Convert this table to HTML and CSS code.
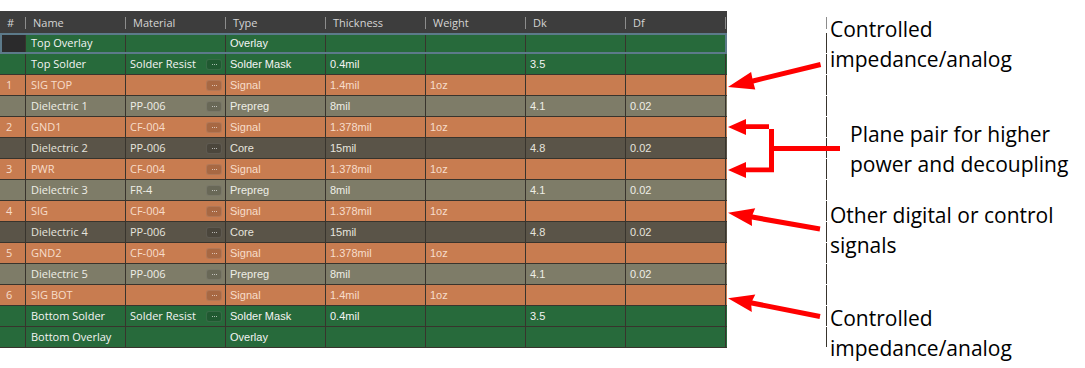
FILE: index.html
```html
<!DOCTYPE html>
<html>
<head>
<meta charset="utf-8">
<link rel="stylesheet" href="styles.css">
</head>
<body>
<div class="page">
  <div class="stack">
    <div class="head">
      <div class="hc">#</div><div class="hc">Name</div><div class="hc">Material</div><div class="hc">Type</div><div class="hc">Thickness</div><div class="hc">Weight</div><div class="hc">Dk</div><div class="hc">Df</div><div class="hc"></div>
    </div>
    <div class="row green selected">
      <div class="c idx dark"></div><div class="c">Top Overlay</div><div class="c mat"></div><div class="c d">Overlay</div><div class="c d"></div><div class="c d"></div><div class="c d"></div><div class="c d"></div><div class="c d"></div>
    </div>
    <div class="row green">
      <div class="c idx"></div><div class="c">Top Solder</div><div class="c mat">Solder Resist<span class="more"><i></i><i></i><i></i></span></div><div class="c d">Solder Mask</div><div class="c d">0.4mil</div><div class="c d"></div><div class="c d">3.5</div><div class="c d"></div><div class="c d"></div>
    </div>
    <div class="row copper">
      <div class="c idx">1</div><div class="c">SIG TOP</div><div class="c mat"><span class="more"><i></i><i></i><i></i></span></div><div class="c d">Signal</div><div class="c d">1.4mil</div><div class="c d">1oz</div><div class="c d"></div><div class="c d"></div><div class="c d"></div>
    </div>
    <div class="row prepreg">
      <div class="c idx"></div><div class="c">Dielectric 1</div><div class="c mat">PP-006<span class="more"><i></i><i></i><i></i></span></div><div class="c d">Prepreg</div><div class="c d">8mil</div><div class="c d"></div><div class="c d">4.1</div><div class="c d">0.02</div><div class="c d"></div>
    </div>
    <div class="row copper">
      <div class="c idx">2</div><div class="c">GND1</div><div class="c mat">CF-004<span class="more"><i></i><i></i><i></i></span></div><div class="c d">Signal</div><div class="c d">1.378mil</div><div class="c d">1oz</div><div class="c d"></div><div class="c d"></div><div class="c d"></div>
    </div>
    <div class="row core">
      <div class="c idx"></div><div class="c">Dielectric 2</div><div class="c mat">PP-006<span class="more"><i></i><i></i><i></i></span></div><div class="c d">Core</div><div class="c d">15mil</div><div class="c d"></div><div class="c d">4.8</div><div class="c d">0.02</div><div class="c d"></div>
    </div>
    <div class="row copper">
      <div class="c idx">3</div><div class="c">PWR</div><div class="c mat">CF-004<span class="more"><i></i><i></i><i></i></span></div><div class="c d">Signal</div><div class="c d">1.378mil</div><div class="c d">1oz</div><div class="c d"></div><div class="c d"></div><div class="c d"></div>
    </div>
    <div class="row prepreg">
      <div class="c idx"></div><div class="c">Dielectric 3</div><div class="c mat">FR-4<span class="more"><i></i><i></i><i></i></span></div><div class="c d">Prepreg</div><div class="c d">8mil</div><div class="c d"></div><div class="c d">4.1</div><div class="c d">0.02</div><div class="c d"></div>
    </div>
    <div class="row copper">
      <div class="c idx">4</div><div class="c">SIG</div><div class="c mat">CF-004<span class="more"><i></i><i></i><i></i></span></div><div class="c d">Signal</div><div class="c d">1.378mil</div><div class="c d">1oz</div><div class="c d"></div><div class="c d"></div><div class="c d"></div>
    </div>
    <div class="row core">
      <div class="c idx"></div><div class="c">Dielectric 4</div><div class="c mat">PP-006<span class="more"><i></i><i></i><i></i></span></div><div class="c d">Core</div><div class="c d">15mil</div><div class="c d"></div><div class="c d">4.8</div><div class="c d">0.02</div><div class="c d"></div>
    </div>
    <div class="row copper">
      <div class="c idx">5</div><div class="c">GND2</div><div class="c mat">CF-004<span class="more"><i></i><i></i><i></i></span></div><div class="c d">Signal</div><div class="c d">1.378mil</div><div class="c d">1oz</div><div class="c d"></div><div class="c d"></div><div class="c d"></div>
    </div>
    <div class="row prepreg">
      <div class="c idx"></div><div class="c">Dielectric 5</div><div class="c mat">PP-006<span class="more"><i></i><i></i><i></i></span></div><div class="c d">Prepreg</div><div class="c d">8mil</div><div class="c d"></div><div class="c d">4.1</div><div class="c d">0.02</div><div class="c d"></div>
    </div>
    <div class="row copper">
      <div class="c idx">6</div><div class="c">SIG BOT</div><div class="c mat"><span class="more"><i></i><i></i><i></i></span></div><div class="c d">Signal</div><div class="c d">1.4mil</div><div class="c d">1oz</div><div class="c d"></div><div class="c d"></div><div class="c d"></div>
    </div>
    <div class="row green">
      <div class="c idx"></div><div class="c">Bottom Solder</div><div class="c mat">Solder Resist<span class="more"><i></i><i></i><i></i></span></div><div class="c d">Solder Mask</div><div class="c d">0.4mil</div><div class="c d"></div><div class="c d">3.5</div><div class="c d"></div><div class="c d"></div>
    </div>
    <div class="row green">
      <div class="c idx"></div><div class="c">Bottom Overlay</div><div class="c mat"></div><div class="c d">Overlay</div><div class="c d"></div><div class="c d"></div><div class="c d"></div><div class="c d"></div><div class="c d"></div>
    </div>
  </div>
  <div class="notes">
    <div class="note n1"><span class="ln">Controlled</span><span class="ln">impedance/analog</span></div>
    <div class="note n2"><span class="ln">Plane pair for higher</span><span class="ln">power and decoupling</span></div>
    <div class="note n3"><span class="ln">Other digital or control</span><span class="ln">signals</span></div>
    <div class="note n4"><span class="ln">Controlled</span><span class="ln">impedance/analog</span></div>
    <svg class="arrows" width="358" height="368" viewBox="727 0 358 368">
      <g fill="#ff0000">
        <path d="M820,62 L752.4,78.5 L751.1,72.1 L728,87 L755.3,89.5 L753.6,83.4 L821.2,66.9 Z"/>
        <path d="M840,146 L774,146 L774,129 L746,129 L746,135 L728,127 L746,119 L746,124.3 L769,124.3 L769,167.5 L746,167.5 L746,162 L728,170 L746,178 L746,172.2 L774,172.2 L774,151 L840,151 Z"/>
        <path d="M820.4,226.5 L752.6,214.6 L755.2,208.3 L728,212.7 L752,226.1 L751.8,219.6 L819.6,231.5 Z"/>
        <path d="M820.5,314 L752.3,300.5 L755.3,294.5 L728,298.3 L751.8,312.1 L751.3,305.4 L819.5,319 Z"/>
      </g>
    </svg>
  </div>
</div>
</body>
</html>
```
FILE: styles.css
```css
html, body {
  margin: 0;
  padding: 0;
  background: #ffffff;
}

.page {
  display: flex;
  height: 368px;
  overflow: hidden;
}

.stack {
  width: 727px;
  flex: none;
  margin-top: 11px;
  align-self: flex-start;
  font-family: "Open Sans", "Noto Sans", sans-serif;
  font-size: 11px;
}

.head {
  display: grid;
  grid-template-columns: 26px repeat(7, 100px) 101px;
  height: 22px;
  box-sizing: border-box;
  padding: 6px 0 4px;
  background: #3d3d3d;
  color: #d4d4d4;
}

.hc {
  border-right: 1px solid #8c8c8c;
  padding-left: 7px;
  line-height: 12px;
  white-space: nowrap;
}

.row {
  display: grid;
  grid-template-columns: 26px repeat(7, 100px) 101px;
  height: 21px;
  box-sizing: border-box;
  border-bottom: 1px solid #38342d;
}

.row.selected {
  outline: 2px solid #5c7a8a;
  outline-offset: -2px;
}

.c {
  display: flex;
  align-items: center;
  padding-left: 5px;
  border-right: 1px solid #38342d;
  white-space: nowrap;
  overflow: hidden;
  line-height: 20px;
}

.c.idx {
  padding-left: 6px;
}

.c.dark {
  background: #2b2b2c;
}

.c.mat {
  padding-left: 4px;
}

.c.d {
  font-family: "Liberation Sans", Arial, sans-serif;
  font-size: 11px;
  padding-left: 4px;
}

.more {
  margin-left: auto;
  margin-right: 3px;
  width: 16px;
  height: 11px;
  box-sizing: border-box;
  border-radius: 3px;
  background: rgba(0, 0, 0, 0.16);
  border: 1px solid rgba(255, 255, 255, 0.1);
  display: flex;
  align-items: center;
  justify-content: center;
  gap: 1px;
}

.more i {
  width: 1px;
  height: 1px;
  background: rgba(255, 255, 255, 0.6);
}

.green {
  background: #276a3b;
  color: #f4f4f4;
}

.copper {
  background: #c87c50;
  color: #f7dccb;
}

.prepreg {
  background: #7e7c68;
  color: #eeeee6;
}

.core {
  background: #5a5448;
  color: #e6e4de;
}

.notes {
  position: relative;
  flex: 1;
  display: flex;
  flex-direction: column;
  align-items: flex-start;
  padding: 14px 0 0 103px;
  font-family: "Open Sans", "Noto Sans", sans-serif;
  font-size: 21px;
  line-height: 30px;
  color: #000000;
}

.arrows {
  position: absolute;
  left: 0;
  top: 0;
}

.note {
  display: flex;
  flex-direction: column;
  white-space: nowrap;
}

.n2 { margin: 45px 0 0 20px; }
.n3 { margin-top: 21px; }
.n4 { margin-top: 43px; }
```
